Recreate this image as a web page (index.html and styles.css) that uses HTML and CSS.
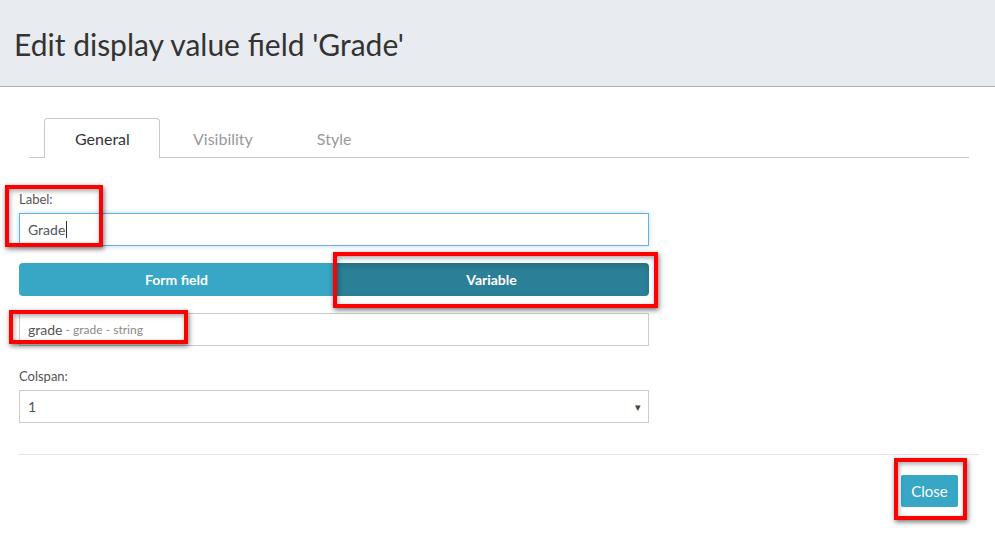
FILE: index.html
```html
<!DOCTYPE html>
<html>
<head>
<meta charset="utf-8">
<link rel="stylesheet" href="styles.css">
</head>
<body>
<div class="page">
  <div class="header">
    <h4 class="title">Edit display value field 'Grade'</h4>
  </div>
  <div class="content">
    <ul class="tabs">
      <li class="tab active">General</li>
      <li class="tab">Visibility</li>
      <li class="tab">Style</li>
    </ul>
    <div class="form">
      <label class="lbl first">Label:</label>
      <div class="input focus">Grade<span class="caret"></span></div>
      <div class="btn-group">
        <div class="seg">Form field</div>
        <div class="seg on">Variable</div>
      </div>
      <div class="input plain"><span class="main">grade</span><span class="sub">&nbsp;- grade - string</span></div>
      <label class="lbl">Colspan:</label>
      <div class="input select">1<span class="arrow">&#9662;</span></div>
    </div>
    <div class="divider"></div>
    <div class="footer">
      <div class="close">Close</div>
    </div>
  </div>
  <div class="mark m1"></div>
  <div class="mark m2"></div>
  <div class="mark m3"></div>
  <div class="mark m4"></div>
</div>
</body>
</html>
```
FILE: styles.css
```css
html, body {
  margin: 0;
  padding: 0;
  background: #fff;
}
body {
  font-family: Lato, "Open Sans", sans-serif;
  color: #333;
}
.page {
  position: relative;
  width: 995px;
  height: 547px;
  overflow: hidden;
}
.header {
  height: 86px;
  background: #e8ecf0;
  border-bottom: 1px solid #a9b0b9;
  display: flex;
  align-items: center;
  padding-left: 14px;
}
.title {
  margin: 0;
  font-size: 30px;
  font-weight: 400;
  color: #333;
  line-height: 36px;
  padding-top: 2px;
}
.content {
  padding: 31px 16px 0 19px;
}
.tabs {
  list-style: none;
  margin: 0 0 0 10px;
  padding: 0 0 0 15px;
  width: 925px;
  display: flex;
  border-bottom: 1px solid #c8c8c8;
}
.tab {
  height: 38px;
  line-height: 40px;
  padding: 0 30px;
  margin-right: 2px;
  font-size: 16px;
  color: #999;
  border: 1px solid transparent;
  border-bottom: none;
  margin-bottom: -1px;
  padding-bottom: 1px;
}
.tab.active {
  color: #333;
  background: #fff;
  border-color: #c8c8c8;
  border-radius: 4px 4px 0 0;
  width: 54px;
}
.form {
  width: 630px;
  display: flex;
  flex-direction: column;
}
.lbl {
  display: block;
  font-size: 13px;
  line-height: 18px;
  color: #555;
  margin: 21px 0 5px;
}
.lbl.first {
  margin-top: 32px;
}
.input {
  box-sizing: border-box;
  height: 33px;
  border: 1px solid #ccc;
  padding: 0 8px;
  font-size: 14px;
  line-height: 31px;
  color: #555;
  display: flex;
  align-items: center;
}
.input.focus {
  border-color: #66afe9;
  box-shadow: 0 0 5px rgba(102, 175, 233, 0.45);
}
.caret {
  display: inline-block;
  width: 1px;
  height: 17px;
  background: #333;
  margin-left: 1px;
}
.btn-group {
  display: flex;
  margin: 17px 0;
  height: 33px;
}
.seg {
  flex: 1;
  background: #38a6c5;
  color: #fff;
  font-size: 14px;
  font-weight: 700;
  display: flex;
  align-items: center;
  justify-content: center;
  border-radius: 4px 0 0 4px;
}
.seg.on {
  background: #2b7f96;
  border-radius: 0 4px 4px 0;
  box-shadow: inset 0 3px 5px rgba(0, 0, 0, 0.13);
}
.plain .main {
  font-size: 14px;
  color: #555;
}
.plain .sub {
  font-size: 12px;
  color: #888;
}
.select {
  justify-content: space-between;
}
.arrow {
  font-size: 11px;
  color: #444;
  margin-right: -1px;
}
.divider {
  width: 960px;
  height: 1px;
  background: #e5e5e5;
  margin-top: 31px;
}
.footer {
  width: 960px;
  display: flex;
  justify-content: flex-end;
  padding-top: 20px;
}
.close {
  width: 57px;
  height: 32px;
  margin-right: 21px;
  background: #38a6c5;
  color: #fff;
  font-size: 15px;
  border-radius: 2px;
  display: flex;
  align-items: center;
  justify-content: center;
}
.mark {
  position: absolute;
  box-sizing: border-box;
  border: 4px solid #ff0000;
  box-shadow: 1px 2px 5px rgba(0, 0, 0, 0.55), inset 1px 2px 5px rgba(0, 0, 0, 0.35);
}
.m1 { left: 5px; top: 185px; width: 98px; height: 62px; }
.m2 { left: 333px; top: 252px; width: 325px; height: 56px; }
.m3 { left: 9px; top: 310px; width: 179px; height: 34px; }
.m4 { left: 894px; top: 458px; width: 73px; height: 62px; }
```
